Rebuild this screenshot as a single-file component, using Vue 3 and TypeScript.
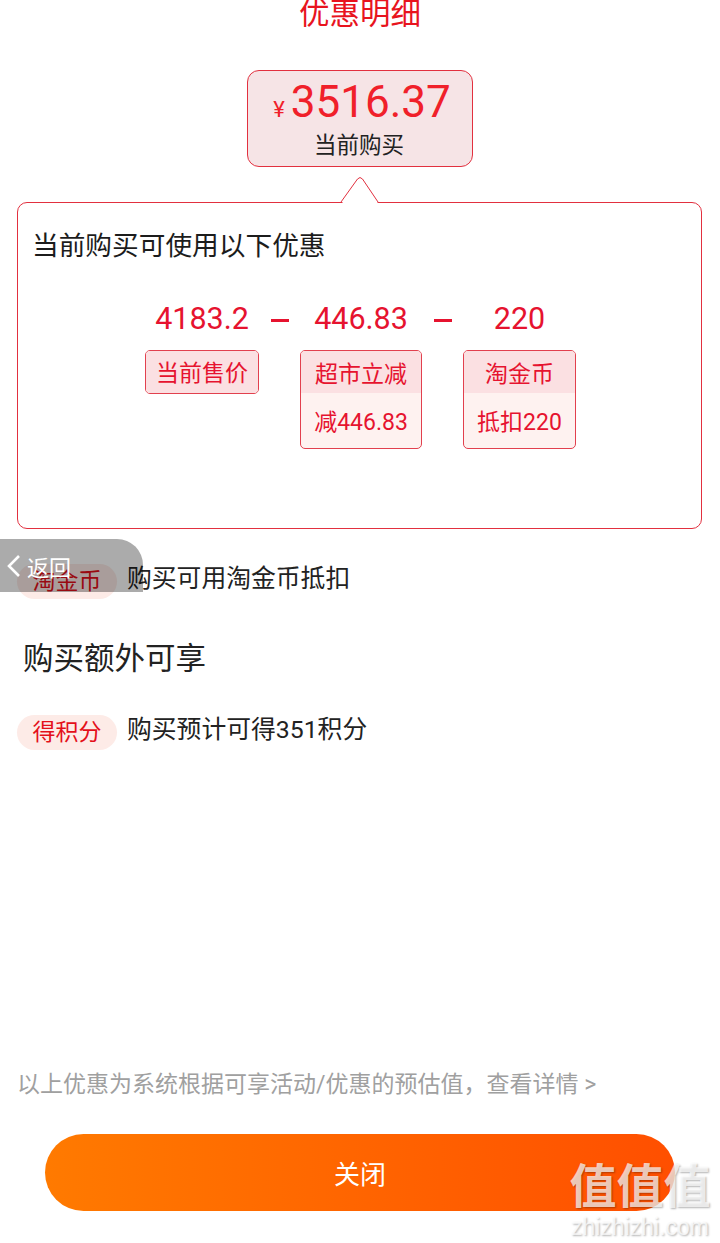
<script setup lang="ts">
interface Part { amount: string; title: string; note?: string; width: number }
const parts: Part[] = [
  { amount: '4183.2', title: '当前售价', width: 114 },
  { amount: '446.83', title: '超市立减', note: '减446.83', width: 122 },
  { amount: '220', title: '淘金币', note: '抵扣220', width: 113 }
]
</script>

<template>
  <div class="page">
    <h1 class="title">优惠明细</h1>
    <div class="price-box">
      <div class="price"><span class="yen">¥</span>3516.37</div>
      <div class="price-label">当前购买</div>
    </div>

    <section class="card">
      <svg class="pointer" width="40" height="28" viewBox="0 0 40 28">
        <path d="M1 26 L17.500 3 Q20 0 22.500 3 L38 26" fill="#fff" stroke="#e2303f" stroke-width="1" />
        <rect x="2.500" y="26" width="35" height="2" fill="#fff" />
      </svg>
      <h2 class="card-title">当前购买可使用以下优惠</h2>
      <div class="calc">
        <template v-for="(p, i) in parts" :key="p.title">
          <div class="col" :style="{ width: p.width + 'px' }">
            <div class="amount">{{ p.amount }}</div>
            <div class="tag" :class="{ single: !p.note }">
              <div class="tag-title">{{ p.title }}</div>
              <div v-if="p.note" class="tag-note">{{ p.note }}</div>
            </div>
          </div>
          <div v-if="i < parts.length - 1" class="minus"></div>
        </template>
      </div>
    </section>

    <div class="row first-row">
      <span class="pill">淘金币</span>
      <span class="row-text">购买可用淘金币抵扣</span>
    </div>
    <h2 class="extra-title">购买额外可享</h2>
    <div class="row">
      <span class="pill">得积分</span>
      <span class="row-text">购买预计可得351积分</span>
    </div>

    <div class="spacer"></div>
    <p class="footnote">以上优惠为系统根据可享活动/优惠的预估值，查看详情 &gt;</p>
    <button class="close" type="button">关闭</button>

    <div class="back">
      <svg width="16" height="24" viewBox="0 0 16 24">
        <path d="M13 2 L3 12 L13 22" fill="none" stroke="#fff" stroke-width="2.600" />
      </svg>
      <span>返回</span>
    </div>
    <div class="watermark">
      <div class="wm-cn">值值值</div>
      <div class="wm-en">zhizhizhi.com</div>
    </div>
  </div>
</template>

<style>
html, body { margin: 0; background: #fff; }
</style>

<style scoped>
.page {
  position: relative;
  width: 720px;
  height: 1243px;
  overflow: hidden;
  background: #fff;
  font-family: Roboto, "Noto Sans CJK SC", sans-serif;
  display: flex;
  flex-direction: column;
  align-items: stretch;
}
.title {
  margin: -6px 0 0;
  height: 76px;
  line-height: 40px;
  font-size: 30.500px;
  font-weight: 400;
  color: #e8141e;
  text-align: center;
}
.price-box {
  align-self: flex-start;
  margin-left: 247px;
  width: 226px;
  height: 97px;
  box-sizing: border-box;
  border: 1px solid #e2303f;
  border-radius: 12px;
  background: #f6e4e6;
  text-align: center;
}
.price {
  height: 58px;
  line-height: 62px;
  font-size: 44px;
  color: #f0202a;
  padding-left: 4px;
}
.yen { font-size: 22px; margin-right: 6px; }
.price-label {
  font-size: 22.500px;
  line-height: 32px;
  color: #222;
  padding-right: 2px;
}
.card {
  position: relative;
  margin: 35px 0 0 17px;
  width: 685px;
  height: 327px;
  box-sizing: border-box;
  border: 1px solid #e2303f;
  border-radius: 10px;
  padding: 25px 14px 0;
}
.pointer { position: absolute; left: 322px; top: -27px; }
.card-title {
  margin: 0;
  font-size: 26.700px;
  font-weight: 400;
  line-height: 36px;
  color: #1c1c1c;
}
.calc {
  display: flex;
  justify-content: flex-start;
  margin: 35px 0 0 113px;
}
.col { display: flex; flex-direction: column; align-items: center; flex: none; }
.amount {
  font-size: 30.500px;
  line-height: 40px;
  color: #e6132f;
  white-space: nowrap;
}
.minus {
  width: 18px;
  height: 3px;
  margin: 20px 11px 0 12px;
  background: #e6132f;
  flex: none;
}
.tag {
  margin-top: 11px;
  box-sizing: border-box;
  width: 100%;
  border: 1px solid #e2404e;
  border-radius: 5px;
  overflow: hidden;
  background: #fef2f0;
  color: #e6132f;
  font-size: 23px;
  text-align: center;
}
.tag-title { background: #fbe0e2; height: 42px; line-height: 47px; }
.tag-note { height: 55px; line-height: 60px; }
.tag.single .tag-title { line-height: 45px; }
.row { display: flex; align-items: center; margin-left: 17px; height: 35px; }
.first-row { margin-top: 35px; }
.pill {
  width: 100px;
  height: 35px;
  line-height: 36px;
  border-radius: 18px;
  background: #fdebe7;
  color: #e4101a;
  text-align: center;
  font-size: 23px;
}
.row-text { margin: 0 0 11px 10px; font-size: 24.800px; color: #222; white-space: nowrap; }
.extra-title {
  margin: 0 0 0 23px;
  height: 116px;
  line-height: 119px;
  font-size: 30.500px;
  font-weight: 400;
  color: #222;
}
.spacer { flex: 1; }
.footnote {
  margin: 0 0 0 17px;
  font-size: 23px;
  line-height: 32px;
  color: #a0a0a0;
  white-space: nowrap;
}
.close {
  margin: 33px 0 32px 45px;
  width: 630px;
  height: 77px;
  border: 0;
  border-radius: 39px;
  background: linear-gradient(90deg, #ff7a00, #ff4f00);
  color: #fff;
  font: inherit;
  font-size: 26px;
}
.back {
  position: absolute;
  left: 0;
  top: 539px;
  width: 143px;
  height: 53px;
  border-radius: 0 26px 0 0;
  background: rgba(0, 0, 0, 0.33);
  color: #fff;
  font-size: 22px;
  display: flex;
  align-items: center;
  padding-left: 6px;
  box-sizing: border-box;
  gap: 5px;
}
.watermark {
  position: absolute;
  left: 567px;
  top: 1159px;
  width: 146px;
  text-align: center;
  color: rgba(255, 255, 255, 0.72);
  text-shadow: 1px 1px 2px rgba(0, 0, 0, 0.3);
}
.wm-cn { font-size: 47px; line-height: 56px; font-weight: 700; white-space: nowrap; }
.wm-en { font-size: 23px; line-height: 24px; white-space: nowrap; font-family: "Liberation Sans", sans-serif; }
</style>
